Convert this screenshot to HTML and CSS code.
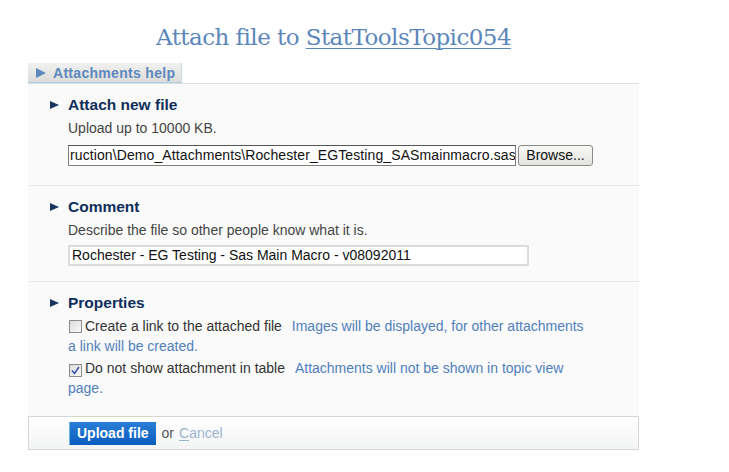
FILE: index.html
```html
<!DOCTYPE html>
<html>
<head>
<meta charset="utf-8">
<link rel="stylesheet" href="styles.css">
</head>
<body>
<div class="page">
  <h1 class="title">Attach file to <a href="#">StatToolsTopic054</a></h1>
  <div class="tab"><span class="tri tri-help"></span>Attachments help</div>
  <div class="panel">
    <div class="section s1">
      <h2 class="head"><span class="tri"></span>Attach new file</h2>
      <p class="note">Upload up to 10000 KB.</p>
      <div class="filerow">
        <div class="fileinput">ruction\Demo_Attachments\Rochester_EGTesting_SASmainmacro.sas<span class="caret"></span></div>
        <div class="browse">Browse...</div>
      </div>
    </div>
    <div class="section s2">
      <h2 class="head"><span class="tri"></span>Comment</h2>
      <p class="note">Describe the file so other people know what it is.</p>
      <div class="textinput">Rochester - EG Testing - Sas Main Macro - v08092011</div>
    </div>
    <div class="section s3">
      <h2 class="head"><span class="tri"></span>Properties</h2>
      <p class="prop"><span class="cb"></span>Create a link to the attached file <span class="hint">Images will be displayed, for other attachments a link will be created.</span></p>
      <p class="prop"><span class="cb checked"><svg width="9" height="9" viewBox="0 0 9 9"><path d="M1 4.5 L3.5 7.5 L8 1" fill="none" stroke="#3a55a8" stroke-width="1.6"/></svg></span>Do not show attachment in table <span class="hint">Attachments will not be shown in topic view page.</span></p>
    </div>
  </div>
  <div class="footer">
    <span class="upload">Upload file</span><span class="or">or</span><a class="cancel" href="#"><u>C</u>ancel</a>
  </div>
</div>
</body>
</html>
```
FILE: styles.css
```css
html, body {
  margin: 0;
  padding: 0;
  background: #ffffff;
}
body {
  font-family: "Liberation Sans", Arial, sans-serif;
  font-size: 14px;
  color: #333;
}
.page {
  width: 611px;
  margin-left: 28px;
  padding-top: 22px;
}
.title {
  margin: 0;
  font-family: "DejaVu Serif", Georgia, serif;
  font-weight: normal;
  font-size: 23px;
  line-height: 31px;
  color: #5b86b9;
  text-align: center;
  letter-spacing: -0.55px;
}
.title a {
  color: #5b86b9;
  text-decoration: underline;
  text-decoration-thickness: 1px;
  text-underline-offset: 3px;
}
.tab {
  display: inline-flex;
  align-items: center;
  margin-top: 10px;
  height: 19px;
  padding: 0 6px 0 8px;
  background: linear-gradient(#f1f1f0, #dcdcda);
  border-right: 1px solid #c9dcea;
  border-bottom: 1px solid #a9cfe6;
  color: #5d88bd;
  font-weight: bold;
  font-size: 14px;
  letter-spacing: 0.3px;
}
.tri {
  display: inline-block;
  width: 0;
  height: 0;
  border-top: 4.5px solid transparent;
  border-bottom: 4.5px solid transparent;
  border-left: 9px solid #1c355f;
  margin-right: 9px;
}
.tri-help {
  border-left-color: #5d88bd;
  margin-right: 7px;
  border-top-width: 5px;
  border-bottom-width: 5px;
  border-left-width: 10px;
}
.panel {
  background: #fafafa;
  border-top: 1px solid #dedede;
}
.section {
  padding: 11px 0 19px 22px;
  border-bottom: 1px solid #e6e6e6;
}
.section.s2 {
  padding-bottom: 15px;
}
.section.s3 {
  border-bottom: none;
  padding-bottom: 18px;
}
.head {
  display: flex;
  align-items: center;
  margin: 0;
  font-size: 15.5px;
  line-height: 20px;
  font-weight: bold;
  color: #0f2e5c;
}
.note {
  margin: 5px 0 0 18px;
  line-height: 16px;
  color: #444;
}
.filerow {
  display: flex;
  align-items: center;
  margin: 9px 0 0 18px;
}
.fileinput {
  width: 444px;
  height: 19px;
  line-height: 19px;
  border: 1px solid #7f7f7f;
  border-top-color: #555;
  background: #fff;
  padding: 0 1px;
  color: #111;
  white-space: nowrap;
  overflow: hidden;
  letter-spacing: 0.1px;
}
.caret {
  display: inline-block;
  width: 1px;
  height: 15px;
  background: #000;
  vertical-align: -3px;
}
.browse {
  margin-left: 2px;
  width: 73px;
  height: 19px;
  line-height: 19px;
  border: 1px solid #8a8a8a;
  border-radius: 3px;
  background: linear-gradient(#f8f8f6, #e3e3df);
  text-align: center;
  color: #111;
}
.textinput {
  margin: 7px 0 0 18px;
  width: 453px;
  height: 17px;
  line-height: 17px;
  border: 2px solid #dcdcdc;
  background: #fff;
  padding: 0 2px;
  color: #111;
}
.prop {
  margin: 3px 0 0 18px;
  width: 522px;
  line-height: 20px;
  color: #333;
}
.prop + .prop {
  margin-top: 2px;
}
.hint {
  color: #4f80ba;
  margin-left: 6px;
}
.cb {
  display: inline-flex;
  align-items: center;
  justify-content: center;
  box-sizing: border-box;
  width: 13px;
  height: 13px;
  border: 1px solid #8c8c8c;
  background: linear-gradient(135deg, #dcdcdc, #fbfbfb);
  vertical-align: -2px;
  margin: 0 3px 0 1px;
}
.footer {
  display: flex;
  align-items: center;
  height: 32px;
  padding-left: 40px;
  border: 1px solid #d6d6d6;
  background: linear-gradient(#ffffff, #f3f4f5);
}
.upload {
  display: inline-block;
  height: 23px;
  line-height: 23px;
  padding: 0 7px 0 7px;
  background: linear-gradient(#2a7ed6, #0a5cbf);
  border-left: 1px solid #6fb5e6;
  color: #fff;
  font-weight: bold;
  font-size: 14px;
}
.or {
  margin-left: 6px;
  color: #555;
}
.cancel {
  margin-left: 5px;
  color: #9bb4d1;
  text-decoration: none;
}
.cancel u {
  text-decoration: underline;
  text-underline-offset: 2px;
}
```
